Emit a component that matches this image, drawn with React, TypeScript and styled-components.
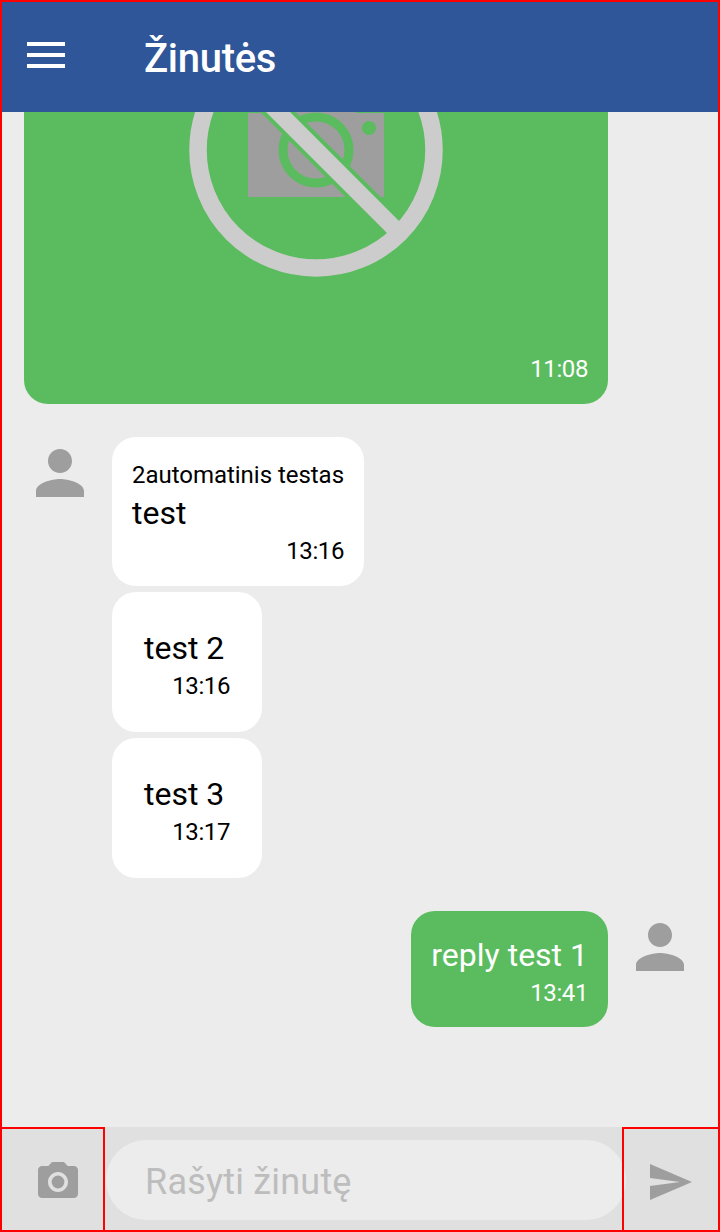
import styled, { createGlobalStyle } from 'styled-components';

type TMessage = {
  id: number;
  name?: string;
  text: string;
  time: string;
};

const incoming: TMessage[] = [
  { id: 1, name: '2automatinis testas', text: 'test', time: '13:16' },
  { id: 2, text: 'test 2', time: '13:16' },
  { id: 3, text: 'test 3', time: '13:17' }
];

const PersonIcon = () => (
  <svg width="72" height="72" viewBox="0 0 24 24" fill="#9e9e9e">
    <path d="M12 12c2.21 0 4-1.79 4-4s-1.79-4-4-4-4 1.79-4 4 1.79 4 4 4zm0 2c-2.67 0-8 1.34-8 4v2h16v-2c0-2.66-5.33-4-8-4z" />
  </svg>
);

const MenuIcon = () => (
  <svg width="38" height="26" viewBox="0 0 38 26" fill="#fff">
    <rect x="0" y="0" width="38" height="4" />
    <rect x="0" y="11" width="38" height="4" />
    <rect x="0" y="22" width="38" height="4" />
  </svg>
);

const CameraIcon = () => (
  <svg width="48" height="48" viewBox="0 0 24 24" fill="#9e9e9e">
    <circle cx="12" cy="12" r="3.2" />
    <path d="M9 2L7.17 4H4c-1.1 0-2 .9-2 2v12c0 1.1.9 2 2 2h16c1.1 0 2-.9 2-2V6c0-1.1-.9-2-2-2h-3.17L15 2H9zm3 15c-2.76 0-5-2.24-5-5s2.24-5 5-5 5 2.24 5 5-2.24 5-5 5z" />
  </svg>
);

const SendIcon = () => (
  <svg width="48" height="48" viewBox="0 0 24 24" fill="#9e9e9e">
    <path d="M2.01 21L23 12 2.01 3 2 10l15 2-15 2z" />
  </svg>
);

// placeholder the app shows when an attachment fails to load
const BrokenImage = () => (
  <svg width="584" height="508" viewBox="-292 -254 584 508">
    <path d="M-68 -37H-40L-28 -52H28L40 -37H68V47H-68Z" fill="#9e9e9e" />
    <circle cx="0" cy="0" r="33" fill="none" stroke="#5abc5e" strokeWidth="9" />
    <circle cx="53" cy="-22" r="7" fill="#5abc5e" />
    <line x1="-90" y1="-90" x2="90" y2="90" stroke="#5abc5e" strokeWidth="25" />
    <circle cx="0" cy="0" r="118" fill="none" stroke="#cccccc" strokeWidth="17.5" />
    <line x1="-84" y1="-84" x2="84" y2="84" stroke="#cccccc" strokeWidth="17" />
  </svg>
);

export default function App() {
  return (
    <Screen>
      <GlobalStyle />
      <Header>
        <MenuIcon />
        <Title>Žinutės</Title>
      </Header>
      <MessageList>
        <ImageBubble>
          <BrokenImage />
          <ImageTime>11:08</ImageTime>
        </ImageBubble>
        <Row>
          <Avatar>
            <PersonIcon />
          </Avatar>
          <Stack>
            {incoming.map(({ id, name, text, time }) => (
              <Bubble key={id} $named={!!name}>
                {name && <SenderName>{name}</SenderName>}
                <MessageText>{text}</MessageText>
                <Time>{time}</Time>
              </Bubble>
            ))}
          </Stack>
        </Row>
        <OwnRow>
          <OwnBubble>
            <MessageText>reply test 1</MessageText>
            <Time>13:41</Time>
          </OwnBubble>
          <Avatar>
            <PersonIcon />
          </Avatar>
        </OwnRow>
      </MessageList>
      <Footer>
        <CameraButton>
          <CameraIcon />
        </CameraButton>
        <InputPill>Rašyti žinutę</InputPill>
        <SendButton>
          <SendIcon />
        </SendButton>
      </Footer>
    </Screen>
  );
}

const GlobalStyle = createGlobalStyle`
  html, body {
    margin: 0;
    padding: 0;
    background: #ececec;
  }
  * {
    box-sizing: border-box;
  }
`;

const Screen = styled.div`
  width: 720px;
  height: 1232px;
  border: 2px solid #ff0000;
  background: #ececec;
  display: flex;
  flex-direction: column;
  overflow: hidden;
  font-family: Roboto, 'Liberation Sans', sans-serif;
`;

const Header = styled.header`
  flex: 0 0 110px;
  background: #2e5698;
  display: flex;
  align-items: center;
  padding: 0 0 4px 25px;
  gap: 79px;
  color: #fff;
`;

const Title = styled.h1`
  margin: 6px 0 0;
  font-size: 40px;
  font-weight: 500;
  line-height: 47px;
  letter-spacing: -0.3px;
`;

const MessageList = styled.main`
  flex: 1;
  min-height: 0;
  overflow: hidden;
  display: flex;
  flex-direction: column;
  justify-content: flex-end;
  gap: 33px;
  padding: 0 22px 100px;
`;

const ImageBubble = styled.div`
  position: relative;
  flex: 0 0 508px;
  width: 584px;
  border-radius: 24px;
  background: #5abc5e;
  overflow: hidden;

  svg {
    display: block;
  }
`;

const ImageTime = styled.span`
  position: absolute;
  right: 20px;
  bottom: 21px;
  font-size: 24px;
  line-height: 28px;
  letter-spacing: -0.4px;
  color: #fff;
`;

const Row = styled.div`
  flex: none;
  display: flex;
  align-items: flex-start;
  gap: 16px;
`;

const OwnRow = styled(Row)`
  justify-content: flex-end;
`;

const Avatar = styled.div`
  flex: 0 0 72px;
  height: 72px;

  svg {
    display: block;
  }
`;

const Stack = styled.div`
  display: flex;
  flex-direction: column;
  align-items: flex-start;
  gap: 6px;
`;

const Bubble = styled.div<{ $named: boolean }>`
  display: flex;
  flex-direction: column;
  min-width: 150px;
  border-radius: 24px;
  background: #fff;
  color: #000;
  padding: ${({ $named }) => ($named ? '24px 20px 21px' : '38px 32px 32px')};
`;

const OwnBubble = styled.div`
  display: flex;
  flex-direction: column;
  border-radius: 24px;
  background: #5abc5e;
  color: #fff;
  padding: 26px 20px 20px;
`;

const SenderName = styled.div`
  font-size: 24px;
  line-height: 28px;
  letter-spacing: -0.03px;
  margin-bottom: 6px;
`;

const MessageText = styled.div`
  font-size: 32px;
  line-height: 37px;
  margin-bottom: 5px;
`;

const Time = styled.div`
  align-self: flex-end;
  font-size: 24px;
  line-height: 28px;
  letter-spacing: -0.4px;
`;

const Footer = styled.footer`
  flex: 0 0 103px;
  display: flex;
  align-items: stretch;
  background: #e0e0e0;
`;

const CameraButton = styled.div`
  flex: 0 0 103px;
  border-top: 2px solid #ff0000;
  border-right: 2px solid #ff0000;
  padding: 29px 0 0 32px;
`;

const InputPill = styled.div`
  flex: 1;
  align-self: flex-start;
  height: 80px;
  margin: 13px -4px 0 1px;
  border-radius: 40px;
  background: #ececec;
  color: #bdbdbd;
  font-size: 36px;
  line-height: 84px;
  letter-spacing: 0.2px;
  padding-left: 39px;
`;

const SendButton = styled.div`
  position: relative;
  flex: 0 0 96px;
  border-top: 2px solid #ff0000;
  border-left: 2px solid #ff0000;
  padding: 29px 0 0 22px;
`;
